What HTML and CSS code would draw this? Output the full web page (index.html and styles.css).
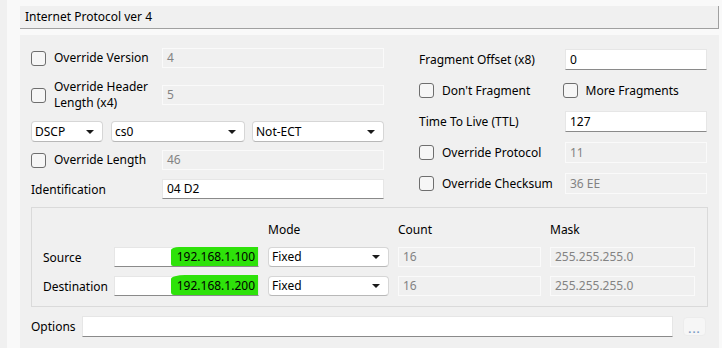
FILE: index.html
```html
<!DOCTYPE html>
<html lang="en">
<head>
    <meta charset="UTF-8">
    <meta name="viewport" content="width=device-width, initial-scale=1.0">
    <link rel="stylesheet" href="styles.css">
    <title>Internet Protocol ver 4</title>
</head>
<body>
    <div class="window">
        <div class="gutter"></div>
        <div class="main">
            <div class="titlebar">Internet Protocol ver 4</div>

            <div class="panel">
                <div class="fields">
                    <div class="col col-left">
                        <div class="row">
                            <label class="check"><span class="box"></span>Override Version</label>
                            <div class="field disabled">4</div>
                        </div>
                        <div class="row row-tall">
                            <label class="check"><span class="box"></span>Override Header<br>Length (x4)</label>
                            <div class="field disabled">5</div>
                        </div>
                        <div class="row selects">
                            <div class="select sel-dscp">DSCP</div>
                            <div class="select sel-cs">cs0</div>
                            <div class="select sel-ecn">Not-ECT</div>
                        </div>
                        <div class="row">
                            <label class="check"><span class="box"></span>Override Length</label>
                            <div class="field disabled">46</div>
                        </div>
                        <div class="row">
                            <span class="label">Identification</span>
                            <div class="field">04 D2</div>
                        </div>
                    </div>

                    <div class="col col-right">
                        <div class="row">
                            <span class="label">Fragment Offset (x8)</span>
                            <div class="field">0</div>
                        </div>
                        <div class="row">
                            <label class="check half"><span class="box"></span>Don't Fragment</label>
                            <label class="check"><span class="box"></span>More Fragments</label>
                        </div>
                        <div class="row">
                            <span class="label">Time To Live (TTL)</span>
                            <div class="field">127</div>
                        </div>
                        <div class="row">
                            <label class="check"><span class="box"></span>Override Protocol</label>
                            <div class="field disabled">11</div>
                        </div>
                        <div class="row">
                            <label class="check"><span class="box"></span>Override Checksum</label>
                            <div class="field disabled">36 EE</div>
                        </div>
                    </div>
                </div>

                <div class="address">
                    <span></span>
                    <span></span>
                    <span class="head">Mode</span>
                    <span class="head">Count</span>
                    <span class="head">Mask</span>

                    <span class="label">Source</span>
                    <div class="field addr"><span class="mark mark-src">192.168.1.100</span></div>
                    <div class="select">Fixed</div>
                    <div class="field disabled">16</div>
                    <div class="field disabled">255.255.255.0</div>

                    <span class="label">Destination</span>
                    <div class="field addr"><span class="mark mark-dst">192.168.1.200</span></div>
                    <div class="select">Fixed</div>
                    <div class="field disabled">16</div>
                    <div class="field disabled">255.255.255.0</div>
                </div>

                <div class="options">
                    <span class="label">Options</span>
                    <div class="field options-field"></div>
                    <button class="more">...</button>
                </div>
            </div>
        </div>
    </div>
</body>
</html>
```

FILE: styles.css
```css
body {
    margin: 0;
    font-family: 'Noto Sans', sans-serif;
    font-size: 12px;
    color: #000;
    background-color: #f9f9f9;
}

.window {
    display: flex;
    height: 348px;
    overflow: hidden;
}

.gutter {
    width: 7px;
    background-color: #f0f0f0;
}

.main {
    width: 699px;
    padding: 6px 0 0 13px;
}

.titlebar {
    height: 22px;
    line-height: 21px;
    padding-left: 5px;
    background-color: #f0f0f0;
    border-bottom: 1px solid #a0a0a0;
    border-right: 1px solid #a0a0a0;
}

.panel {
    margin-top: 6px;
    height: 320px;
    padding: 13px 10px 0 11px;
    background-color: #f0f0f0;
}

.fields {
    display: flex;
    gap: 35px;
}

.col {
    display: flex;
    flex-direction: column;
}

.col-left {
    width: 353px;
    gap: 9px;
}

.col-right {
    width: 288px;
    gap: 10px;
    padding-top: 1px;
}

.row {
    display: flex;
    align-items: center;
    height: 20px;
}

.col-right .row {
    height: 21px;
}

.row-tall {
    height: 34px;
    margin-top: 1px;
}

.check {
    display: flex;
    align-items: center;
    width: 131px;
    line-height: 16px;
}

.col-right .check,
.col-right .label {
    width: 146px;
}

.col-right .check.half {
    width: 145px;
}

.box {
    flex: none;
    width: 13px;
    height: 13px;
    margin-right: 8px;
    border: 1px solid #6e6e6e;
    border-radius: 3px;
    background-color: #f6f6f6;
}

.label {
    width: 131px;
}

.field {
    box-sizing: border-box;
    flex: 1;
    height: 20px;
    line-height: 18px;
    padding: 0 4px;
    background-color: #fff;
    border: 1px solid #e6e6e6;
    border-bottom-color: #8a8a8a;
    white-space: nowrap;
}

.col-right .field {
    height: 21px;
    line-height: 19px;
}

.field.disabled {
    background-color: #f0f0f0;
    border-color: #fafafa;
    color: #838383;
}

.selects {
    gap: 8px;
}

.select {
    box-sizing: border-box;
    position: relative;
    height: 21px;
    line-height: 19px;
    padding: 0 3px;
    background-color: #fff;
    border: 1px solid #d6d6d6;
    border-bottom-color: #b8b8b8;
    border-radius: 4px;
}

.select::after {
    content: "";
    position: absolute;
    right: 8px;
    top: 8px;
    border-left: 4px solid transparent;
    border-right: 4px solid transparent;
    border-top: 4px solid #1a1a1a;
}

.sel-dscp {
    width: 72px;
}

.sel-cs {
    width: 134px;
    margin-right: -1px;
}

.sel-ecn {
    width: 132px;
}

.address {
    box-sizing: border-box;
    display: grid;
    grid-template-columns: 62px 145px 121px 143px 145px;
    grid-template-rows: 16px 20px 20px;
    column-gap: 9px;
    row-gap: 9px;
    align-items: center;
    width: 677px;
    margin-top: 8px;
    padding: 14px 12px 10px 11px;
    border: 1px solid #dadada;
}

.address .select {
    height: 20px;
    line-height: 18px;
}

.address .select::after {
    top: 7px;
}

.head {
    line-height: 16px;
}

.field.addr {
    display: flex;
    justify-content: flex-end;
    padding: 0;
}

.mark {
    height: 19px;
    margin-top: -1px;
    padding: 0 3px 0 6px;
    line-height: 20px;
    background-color: #2ee20a;
}

.mark-src {
    border-radius: 8px 0 0 2px / 3px 0 0 2px;
}

.mark-dst {
    margin-top: -2px;
    height: 20px;
    line-height: 21px;
    border-radius: 14px 0 0 3px / 4px 0 0 3px;
}

.options {
    display: flex;
    align-items: center;
    width: 675px;
    margin-top: 9px;
}

.options .label {
    width: 51px;
}

.options-field {
    height: 21px;
}

.more {
    width: 23px;
    height: 19px;
    margin-left: 10px;
    padding: 3px 0 0;
    font-family: 'Noto Sans', sans-serif;
    font-size: 11px;
    font-weight: bold;
    letter-spacing: 1px;
    color: #7b9cc4;
    background-color: #f6f6f6;
    border: 1px solid #ececec;
    border-radius: 4px;
}
```
